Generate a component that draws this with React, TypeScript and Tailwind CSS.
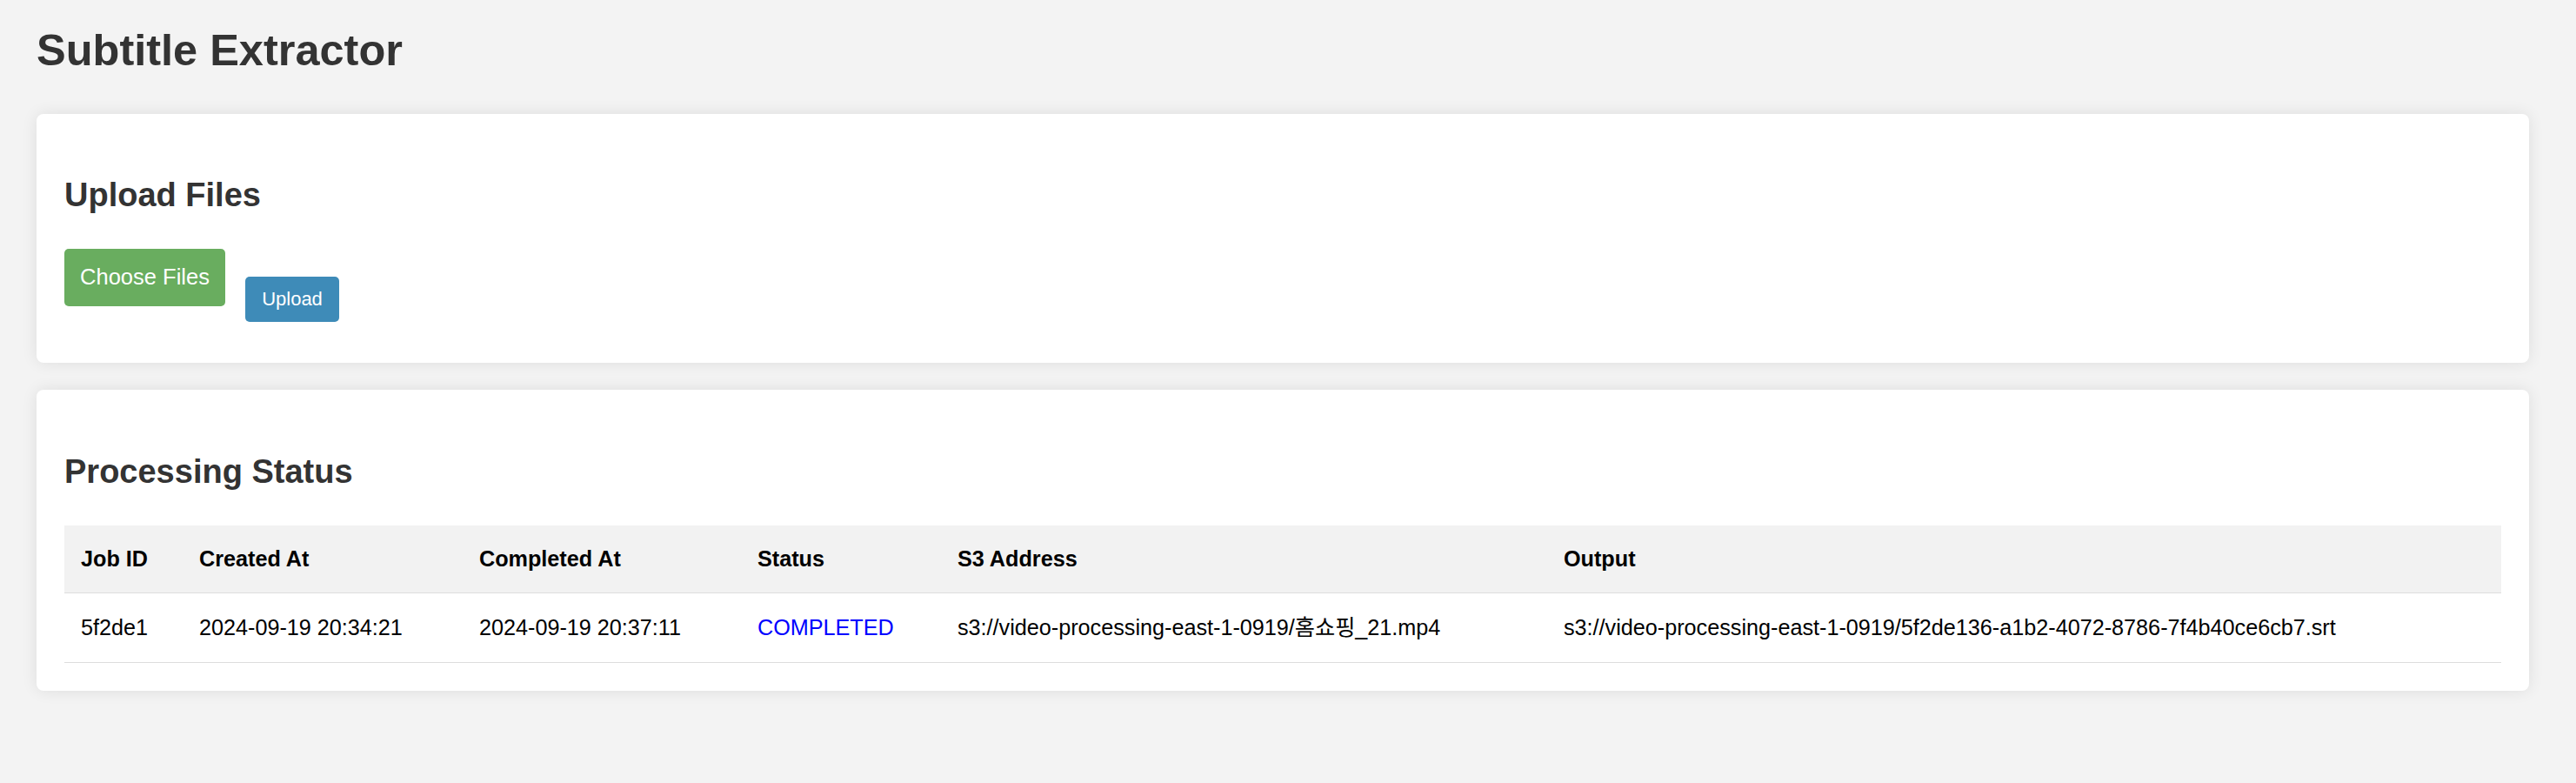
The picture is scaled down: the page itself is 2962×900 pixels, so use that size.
import React from "react";

const font = "font-['Liberation_Sans',Arial,'Noto_Sans_CJK_KR',sans-serif]";

export default function App() {
  return (
    <div className={`min-h-[900px] w-[2962px] bg-[#f3f3f3] pl-[42px] pt-[29px] pb-[60px] text-[#333] ${font}`}>
      <h1 className="m-0 text-[50.5px] font-bold leading-[58px] text-[#333]">Subtitle Extractor</h1>

      <div className="mt-[44px] w-[2866px] rounded-[8px] bg-white px-[32px] pt-[71px] pb-[47px] shadow-[0_0_18px_rgba(0,0,0,0.09)]">
        <h2 className="m-0 text-[38px] font-bold leading-[44px] text-[#333]">Upload Files</h2>
        <div className="mt-[40px] flex items-start">
          <label className="flex h-[66px] w-[185px] cursor-pointer items-center justify-center rounded-[5px] bg-[#69ad5f] text-[25.5px] leading-none text-white">
            Choose Files
          </label>
          <button className="ml-[23px] mt-[32px] flex h-[52px] w-[108px] items-center justify-center rounded-[5px] bg-[#3e8bb8] text-[22px] leading-none text-white">
            Upload
          </button>
        </div>
      </div>

      <div className="mt-[31px] w-[2866px] rounded-[8px] bg-white px-[32px] pt-[72px] pb-[32px] shadow-[0_0_18px_rgba(0,0,0,0.09)]">
        <h2 className="m-0 text-[38px] font-bold leading-[44px] text-[#333]">Processing Status</h2>
        <table className="mt-[40px] w-full table-fixed border-collapse text-left text-[25.2px] leading-[29px] text-black">
          <thead>
            <tr className="bg-[#f2f2f2]">
              <th className="w-[136px] border-b border-[#dddddd] px-[19px] py-[24px] font-bold">Job ID</th>
              <th className="w-[322px] border-b border-[#dddddd] px-[19px] py-[24px] font-bold">Created At</th>
              <th className="w-[320px] border-b border-[#dddddd] px-[19px] py-[24px] font-bold">Completed At</th>
              <th className="w-[230px] border-b border-[#dddddd] px-[19px] py-[24px] font-bold">Status</th>
              <th className="w-[697px] border-b border-[#dddddd] px-[19px] py-[24px] font-bold">S3 Address</th>
              <th className="border-b border-[#dddddd] px-[19px] py-[24px] font-bold">Output</th>
            </tr>
          </thead>
          <tbody>
            <tr>
              <td className="whitespace-nowrap border-b border-[#dddddd] px-[19px] py-[25px]">5f2de1</td>
              <td className="whitespace-nowrap border-b border-[#dddddd] px-[19px] py-[25px]">2024-09-19 20:34:21</td>
              <td className="whitespace-nowrap border-b border-[#dddddd] px-[19px] py-[25px]">2024-09-19 20:37:11</td>
              <td className="whitespace-nowrap border-b border-[#dddddd] px-[19px] py-[25px] text-[#0000ff]">COMPLETED</td>
              <td className="whitespace-nowrap border-b border-[#dddddd] px-[19px] py-[25px]">s3://video-processing-east-1-0919/홈쇼핑_21.mp4</td>
              <td className="whitespace-nowrap border-b border-[#dddddd] px-[19px] py-[25px]">s3://video-processing-east-1-0919/5f2de136-a1b2-4072-8786-7f4b40ce6cb7.srt</td>
            </tr>
          </tbody>
        </table>
      </div>
    </div>
  );
}
